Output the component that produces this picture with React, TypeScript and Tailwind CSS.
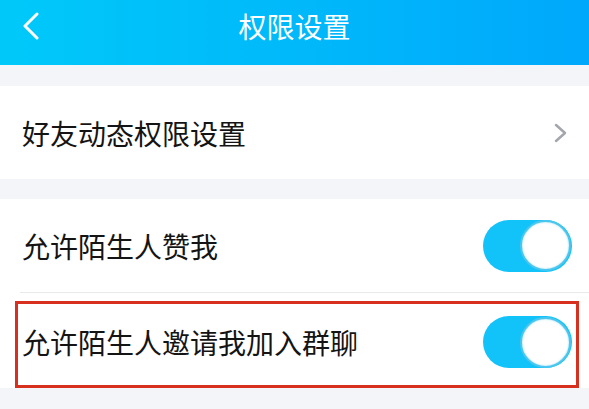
import React from "react";

const font = { fontFamily: '"Noto Sans CJK SC", "Noto Sans", sans-serif' };

function Toggle() {
  return (
    <div className="flex h-[52px] w-[89px] items-center justify-end rounded-full bg-[#12c3f9] p-[1px]">
      <div className="h-[51px] w-[51px] rounded-full border-[2px] border-[#4cc6ee] bg-white shadow-[inset_0_0_2px_rgba(40,180,230,0.5)]" />
    </div>
  );
}

export default function App() {
  return (
    <div className="h-[409px] w-[589px] overflow-hidden bg-[#f4f5f9]" style={font}>
      <div className="relative flex h-[65px] items-start justify-center bg-gradient-to-r from-[#00c9f9] to-[#00a8fb] pt-[11px]">
        <svg className="absolute left-[22px] top-[12px]" width="18" height="28" viewBox="0 0 18 28" fill="none">
          <path d="M15 2 L3 14 L15 26" stroke="white" strokeWidth="3" strokeLinecap="round" strokeLinejoin="round" />
        </svg>
        <span className="text-[28px] leading-[30px] text-white">权限设置</span>
      </div>
      <div className="h-[21px]" />
      <div className="flex h-[93px] items-center justify-between bg-white pl-[22px] pr-[22px]">
        <span className="text-[28px] leading-none text-[#141414]">好友动态权限设置</span>
        <svg width="13" height="20" viewBox="0 0 13 20" fill="none">
          <path d="M2 2 L11 10 L2 18" stroke="#a3a6ad" strokeWidth="2.5" strokeLinecap="round" strokeLinejoin="round" />
        </svg>
      </div>
      <div className="h-[20px]" />
      <div className="bg-white">
        <div className="flex h-[93px] items-center justify-between pl-[22px] pr-[17px]">
          <span className="text-[28px] leading-none text-[#141414]">允许陌生人赞我</span>
          <Toggle />
        </div>
        <div className="ml-[20px] h-[1px] bg-[#e8e9ee]" />
        <div className="relative flex h-[95px] items-center justify-between pl-[22px] pr-[17px] pt-[3px]">
          <span className="text-[28px] leading-none text-[#141414]">允许陌生人邀请我加入群聊</span>
          <Toggle />
          <div className="pointer-events-none absolute bottom-[0px] left-[15px] right-[10px] top-[8px] border-[3px] border-[#d8301f]" />
        </div>
      </div>
    </div>
  );
}
